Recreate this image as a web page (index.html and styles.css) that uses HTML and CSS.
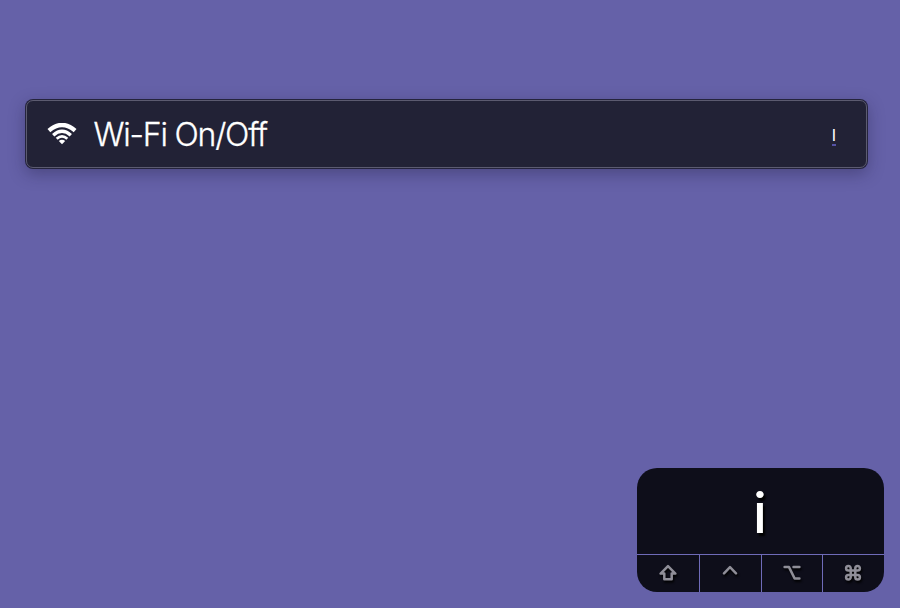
FILE: index.html
```html
<!DOCTYPE html>
<html lang="en">
<head>
<meta charset="utf-8">
<title>Wi-Fi On/Off</title>
<link rel="stylesheet" href="styles.css">
</head>
<body>
<main class="command">
  <svg class="wifi" viewBox="0 0 30 22" aria-hidden="true">
    <path d="M1.9 7.6Q15-3.7 28.1 7.6" stroke-width="4.3"/>
    <path d="M6.2 12.2Q15 4.3 23.8 12.2" stroke-width="3.4"/>
    <path d="M9.7 15.8Q15 11 20.3 15.8" stroke-width="2.8"/>
    <path class="dot" d="M11.8 18Q15 15.6 18.2 18L15 21.2Z"/>
  </svg>
  <h1 class="title">Wi-Fi On/Off</h1>
  <span class="query">I</span>
</main>
<aside class="keys">
  <div class="pressed">i</div>
  <div class="modifiers">
    <div class="key"><svg viewBox="0 0 20 18"><path d="M10 2.2 2.6 9.6H6.3V15.3H13.7V9.6H17.4Z"/></svg></div>
    <div class="key"><svg viewBox="0 0 20 18"><path d="M4 9.3 10 3.2 16 9.3"/></svg></div>
    <div class="key"><svg viewBox="0 0 20 18"><path d="M2.6 3.1H7L12.6 14.4H17.4M11.5 3.1H17.4"/></svg></div>
    <div class="key"><svg viewBox="0 0 20 18"><path d="M7.7 6.6H5.4A2.3 2.3 0 1 1 7.7 4.3V13.3A2.3 2.3 0 1 1 5.4 11H14.6A2.3 2.3 0 1 1 12.3 13.3V4.3A2.3 2.3 0 1 1 14.6 6.6Z"/></svg></div>
  </div>
</aside>
</body>
</html>
```
FILE: styles.css
```css
* { box-sizing: border-box; }

body {
  margin: 0;
  height: 608px;
  overflow: hidden;
  display: flex;
  flex-direction: column;
  justify-content: space-between;
  padding: 100px 16px 16px 26px;
  background: #6561a8;
  color: #fff;
  font-family: Inter, "Liberation Sans", sans-serif;
}

.command {
  width: 841px;
  height: 68px;
  display: flex;
  align-items: center;
  padding: 0 30px 0 20px;
  background: #222236;
  border: 1px solid #5c5b70;
  border-radius: 7px;
  box-shadow: 0 0 0 1px #25243d, 0 5px 16px 1px rgba(25, 22, 55, 0.34);
}

.wifi {
  width: 30px;
  height: 22px;
  fill: none;
  stroke: #fff;
}

.wifi .dot {
  fill: #fff;
  stroke: none;
}

.title {
  margin: 1px 0 0 16.5px;
  font-size: 32px;
  font-weight: 300;
  line-height: 40px;
  letter-spacing: -1.2px;
  white-space: nowrap;
  -webkit-text-stroke: 0.3px #fff;
}

.query {
  margin: 4px 0 0 auto;
  width: 4px;
  border-bottom: 2px solid #5552a5;
  font-size: 16px;
  font-weight: 400;
  line-height: 18px;
  display: flex;
  justify-content: center;
}

.keys {
  align-self: flex-end;
  width: 247px;
  height: 124px;
  display: grid;
  grid-template-rows: 86px 37px;
  gap: 1px;
  overflow: hidden;
  border-radius: 20px;
  background: #6f6bb8;
}

.pressed {
  display: flex;
  align-items: center;
  justify-content: center;
  padding: 4px 1px 0 0;
  background: #0e0e1a;
  font-size: 55px;
  font-weight: 500;
  line-height: 70px;
  text-shadow: 2px 3px 2px #000;
}

.modifiers {
  display: grid;
  grid-template-columns: 62px 61px 60px 61px;
  gap: 1px;
}

.key {
  display: flex;
  align-items: center;
  justify-content: center;
  padding: 0 1px 2px 0;
  background: #0e0e1a;
}

.key svg {
  width: 20px;
  height: 18px;
  fill: none;
  stroke: #8f8e98;
  stroke-width: 2.5;
  stroke-linecap: round;
  stroke-linejoin: round;
  filter: drop-shadow(1px 2px 1px #000);
}
```
